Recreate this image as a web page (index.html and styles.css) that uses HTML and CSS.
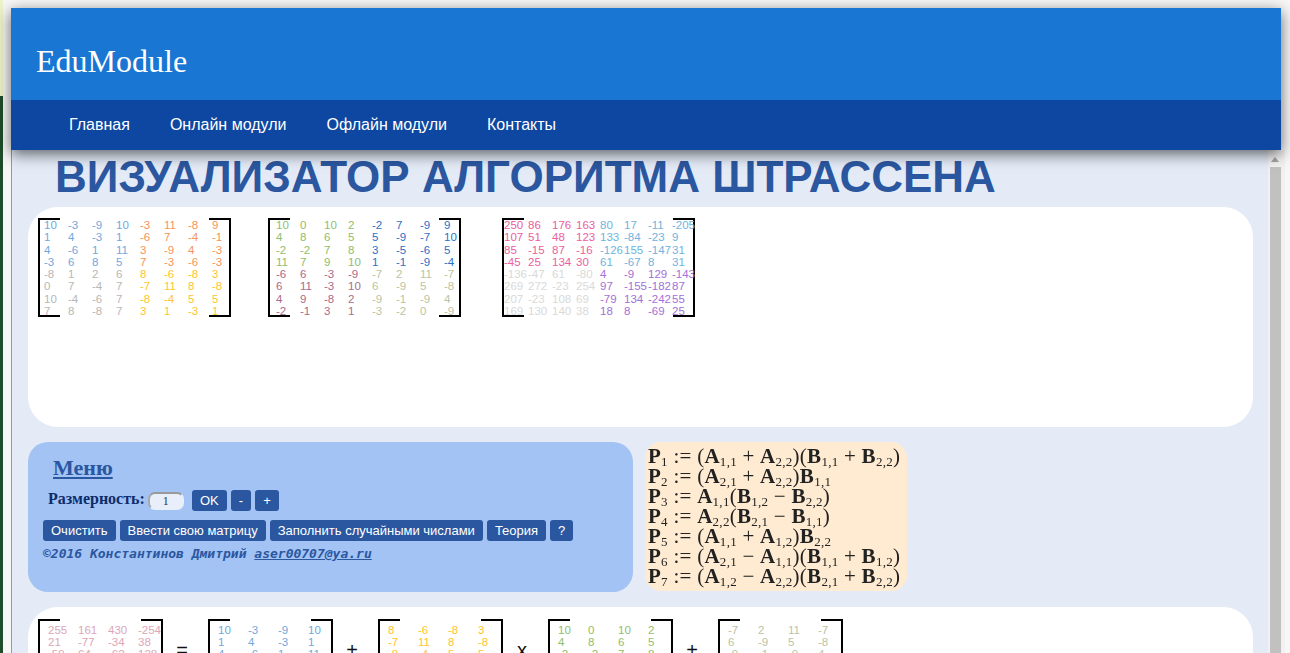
FILE: index.html

```html
<!DOCTYPE html>
<html lang="ru">
<head>
    <meta charset="UTF-8">
    <title>Визуализатор алгоритма Штрассена</title>
    <link rel="stylesheet" href="styles.css">
</head>
<body>
    <header class="site-header">
        <div class="brand">EduModule</div>
        <nav class="nav">
            <a href="#">Главная</a>
            <a href="#">Онлайн модули</a>
            <a href="#">Офлайн модули</a>
            <a href="#">Контакты</a>
        </nav>
    </header>

    <div class="frame">
        <main class="content">
            <h1>ВИЗУАЛИЗАТОР АЛГОРИТМА ШТРАССЕНА</h1>

            <section class="panel panel-top">
                <div class="matrix big m1">
                    <div class="quad c-blue"><span>10</span><span>-3</span><span>-9</span><span>10</span><span>1</span><span>4</span><span>-3</span><span>1</span><span>4</span><span>-6</span><span>1</span><span>11</span><span>-3</span><span>6</span><span>8</span><span>5</span></div>
                    <div class="quad c-orange"><span>-3</span><span>11</span><span>-8</span><span>9</span><span>-6</span><span>7</span><span>-4</span><span>-1</span><span>3</span><span>-9</span><span>4</span><span>-3</span><span>7</span><span>-3</span><span>-6</span><span>-3</span></div>
                    <div class="quad c-gray"><span>-8</span><span>1</span><span>2</span><span>6</span><span>0</span><span>7</span><span>-4</span><span>7</span><span>10</span><span>-4</span><span>-6</span><span>7</span><span>7</span><span>8</span><span>-8</span><span>7</span></div>
                    <div class="quad c-yellow"><span>8</span><span>-6</span><span>-8</span><span>3</span><span>-7</span><span>11</span><span>8</span><span>-8</span><span>-8</span><span>-4</span><span>5</span><span>5</span><span>3</span><span>1</span><span>-3</span><span>1</span></div>
                </div>
                <div class="matrix big m2">
                    <div class="quad c-green"><span>10</span><span>0</span><span>10</span><span>2</span><span>4</span><span>8</span><span>6</span><span>5</span><span>-2</span><span>-2</span><span>7</span><span>8</span><span>11</span><span>7</span><span>9</span><span>10</span></div>
                    <div class="quad c-deep"><span>-2</span><span>7</span><span>-9</span><span>9</span><span>5</span><span>-9</span><span>-7</span><span>10</span><span>3</span><span>-5</span><span>-6</span><span>5</span><span>1</span><span>-1</span><span>-9</span><span>-4</span></div>
                    <div class="quad c-mauve"><span>-6</span><span>6</span><span>-3</span><span>-9</span><span>6</span><span>11</span><span>-3</span><span>10</span><span>4</span><span>9</span><span>-8</span><span>2</span><span>-2</span><span>-1</span><span>3</span><span>1</span></div>
                    <div class="quad c-sage"><span>-7</span><span>2</span><span>11</span><span>-7</span><span>6</span><span>-9</span><span>5</span><span>-8</span><span>-9</span><span>-1</span><span>-9</span><span>4</span><span>-3</span><span>-2</span><span>0</span><span>-9</span></div>
                </div>
                <div class="matrix big m3">
                    <div class="quad c-pink"><span>250</span><span>86</span><span>176</span><span>163</span><span>107</span><span>51</span><span>48</span><span>123</span><span>85</span><span>-15</span><span>87</span><span>-16</span><span>-45</span><span>25</span><span>134</span><span>30</span></div>
                    <div class="quad c-sky"><span>80</span><span>17</span><span>-11</span><span>-205</span><span>133</span><span>-84</span><span>-23</span><span>9</span><span>-126</span><span>155</span><span>-147</span><span>31</span><span>61</span><span>-67</span><span>8</span><span>31</span></div>
                    <div class="quad c-silver"><span>-136</span><span>-47</span><span>61</span><span>-80</span><span>269</span><span>272</span><span>-23</span><span>254</span><span>207</span><span>-23</span><span>108</span><span>69</span><span>169</span><span>130</span><span>140</span><span>38</span></div>
                    <div class="quad c-purple"><span>4</span><span>-9</span><span>129</span><span>-143</span><span>97</span><span>-155</span><span>-182</span><span>87</span><span>-79</span><span>134</span><span>-242</span><span>55</span><span>18</span><span>8</span><span>-69</span><span>25</span></div>
                </div>
            </section>

            <div class="middle">
                <section class="menu">
                    <h2><a href="#">Меню</a></h2>
                    <div class="size-row">
                        <label for="size">Размерность:</label>
                        <input id="size" class="size-input" value="1">
                        <button class="btn ok">OK</button>
                        <button class="btn">-</button>
                        <button class="btn">+</button>
                    </div>
                    <div class="btn-row">
                        <button class="btn">Очистить</button>
                        <button class="btn">Ввести свою матрицу</button>
                        <button class="btn">Заполнить случайными числами</button>
                        <button class="btn">Теория</button>
                        <button class="btn">?</button>
                    </div>
                    <p class="copy">©2016 Константинов Дмитрий <a href="#">aser00707@ya.ru</a></p>
                </section>

                <section class="formulas">
                    <div><b>P</b><sub>1</sub> := (<b>A</b><sub>1,1</sub> + <b>A</b><sub>2,2</sub>)(<b>B</b><sub>1,1</sub> + <b>B</b><sub>2,2</sub>)</div>
                    <div><b>P</b><sub>2</sub> := (<b>A</b><sub>2,1</sub> + <b>A</b><sub>2,2</sub>)<b>B</b><sub>1,1</sub></div>
                    <div><b>P</b><sub>3</sub> := <b>A</b><sub>1,1</sub>(<b>B</b><sub>1,2</sub> − <b>B</b><sub>2,2</sub>)</div>
                    <div><b>P</b><sub>4</sub> := <b>A</b><sub>2,2</sub>(<b>B</b><sub>2,1</sub> − <b>B</b><sub>1,1</sub>)</div>
                    <div><b>P</b><sub>5</sub> := (<b>A</b><sub>1,1</sub> + <b>A</b><sub>1,2</sub>)<b>B</b><sub>2,2</sub></div>
                    <div><b>P</b><sub>6</sub> := (<b>A</b><sub>2,1</sub> − <b>A</b><sub>1,1</sub>)(<b>B</b><sub>1,1</sub> + <b>B</b><sub>1,2</sub>)</div>
                    <div><b>P</b><sub>7</sub> := (<b>A</b><sub>1,2</sub> − <b>A</b><sub>2,2</sub>)(<b>B</b><sub>2,1</sub> + <b>B</b><sub>2,2</sub>)</div>
                </section>
            </div>

            <section class="panel panel-bottom">
                <div class="matrix small">
                    <div class="quad c-rose"><span>255</span><span>161</span><span>430</span><span>-254</span><span>21</span><span>-77</span><span>-34</span><span>38</span><span>-59</span><span>64</span><span>-62</span><span>128</span></div>
                </div>
                <span class="op">=</span>
                <div class="matrix small">
                    <div class="quad c-blue"><span>10</span><span>-3</span><span>-9</span><span>10</span><span>1</span><span>4</span><span>-3</span><span>1</span><span>4</span><span>-6</span><span>1</span><span>11</span></div>
                </div>
                <span class="op">+</span>
                <div class="matrix small">
                    <div class="quad c-yellow"><span>8</span><span>-6</span><span>-8</span><span>3</span><span>-7</span><span>11</span><span>8</span><span>-8</span><span>-8</span><span>-4</span><span>5</span><span>5</span></div>
                </div>
                <span class="op">x</span>
                <div class="matrix small">
                    <div class="quad c-green"><span>10</span><span>0</span><span>10</span><span>2</span><span>4</span><span>8</span><span>6</span><span>5</span><span>-2</span><span>-2</span><span>7</span><span>8</span></div>
                </div>
                <span class="op">+</span>
                <div class="matrix small">
                    <div class="quad c-sage"><span>-7</span><span>2</span><span>11</span><span>-7</span><span>6</span><span>-9</span><span>5</span><span>-8</span><span>-9</span><span>-1</span><span>-9</span><span>4</span></div>
                </div>
            </section>
        </main>

        <div class="scrollbar">
            <div class="scroll-arrow"></div>
            <div class="scroll-thumb"></div>
        </div>
    </div>
</body>
</html>
```

FILE: styles.css

```css
body { margin: 0; padding: 8px 0 0 11px; box-sizing: border-box; height: 653px; overflow: hidden; font-family: "Liberation Sans", Arial, sans-serif; background: linear-gradient(#eef2c8, #eef2c8) 0 0 / 3px 96px no-repeat, linear-gradient(#1f4d2b, #1f4d2b) 0 0 / 3px 100% no-repeat, #f7f7f7; }

.site-header { position: relative; z-index: 2; width: 1270px; box-shadow: 0 4px 14px rgba(0, 0, 0, .6); }
.brand { height: 92px; box-sizing: border-box; padding: 34px 0 0 25px; background: #1976d2; color: #fff; font-family: "Liberation Serif", serif; font-size: 32px; line-height: 38px; }
.nav { height: 50px; display: flex; gap: 40px; padding-left: 58px; align-items: center; background: #0d47a1; }
.nav a { color: #fff; font-size: 16px; text-decoration: none; }

.frame { display: flex; height: 503px; }
.content { box-sizing: border-box; width: 1257px; padding: 0 15px 0 16px; border-left: 1px solid #999; background: #e4ebf7; overflow: hidden; }
h1 { margin: 0; padding-left: 27px; height: 57px; color: #2b57a0; font-size: 44px; line-height: 54px; white-space: nowrap; }

.panel { background: #fff; border-radius: 30px; box-sizing: border-box; display: flex; }
.panel-top { height: 220px; padding: 11px 0 0 10px; }
.panel-bottom { height: 200px; padding: 12px 0 0 10px; }

.matrix { box-sizing: border-box; border-left: 2px solid #000; border-right: 2px solid #000; font-size: 11.5px; line-height: 12px; background:
    linear-gradient(#000, #000) top left / 20px 2px no-repeat,
    linear-gradient(#000, #000) top right / 20px 2px no-repeat,
    linear-gradient(#000, #000) bottom left / 20px 2px no-repeat,
    linear-gradient(#000, #000) bottom right / 20px 2px no-repeat; }
.big { width: 193px; height: 99px; padding-top: 1px; display: grid; grid-template-columns: 96px 96px; }
.big .quad { display: grid; grid-template-columns: repeat(4, 24px); }
.m1 { padding-left: 4px; }
.m2 { padding-left: 6px; margin-left: 37px; }
.m3 { margin-left: 41px; }
.quad span { white-space: nowrap; }

.small { width: 125px; height: 100px; padding: 5px 0 0 8px; }
.small .quad { display: grid; grid-template-columns: repeat(4, 30px); }
.op { width: 38px; padding: 19px 7px 0 0; text-align: center; font-size: 20px; line-height: 24px; color: #111; }

.c-blue { color: #6fa8dc; }
.c-orange { color: #f6935c; }
.c-gray { color: #b7b7b7; }
.c-yellow { color: #ffc42e; }
.c-green { color: #8fbe6a; }
.c-deep { color: #1f72c9; }
.c-mauve { color: #a96b8c; }
.c-sage { color: #b9c4a4; }
.c-pink { color: #ec5ea0; }
.c-sky { color: #6fb3e0; }
.c-silver { color: #d9d9d9; }
.c-purple { color: #a56fd9; }
.c-rose { color: #dca6b8; }

.middle { display: flex; gap: 12px; margin: 15px 0; }
.menu { box-sizing: border-box; width: 605px; height: 150px; padding: 13px 15px 0; background: #a2c3f4; border-radius: 20px; }
.menu h2 { margin: 0 0 0 10px; font-family: "Liberation Serif", serif; font-size: 22px; line-height: 25px; }
.menu h2 a { color: #2b57a0; }
.size-row { display: flex; align-items: flex-start; margin: 10px 0 0 5px; height: 21px; }
.size-row label { color: #0d2c6b; font-family: "Liberation Serif", serif; font-weight: bold; font-size: 16px; line-height: 17px; margin-right: 3px; }
.size-input { box-sizing: border-box; width: 36px; height: 18px; margin: 2px 8px 0 0; padding: 0; text-align: center; font-family: "Liberation Serif", serif; font-size: 12px; color: #333; background: #e8eefa; border: 2px solid #e8eefa; border-top-color: #999; border-left-color: #aaa; border-radius: 7px; }
.btn { height: 21px; padding: 0 8px; margin-right: 4px; border: 0; border-radius: 3px; background: #2b57a0; color: #fff; font-family: "Liberation Sans", Arial, sans-serif; font-size: 13px; }
.ok { width: 35px; }
.btn-row { display: flex; margin-top: 9px; }
.copy { margin: 5px 0 0; font-family: "DejaVu Sans Mono", monospace; font-weight: bold; font-style: italic; font-size: 13px; line-height: 15px; color: #2b57a0; white-space: nowrap; }
.copy a { color: #2b57a0; }

.formulas { box-sizing: border-box; width: 262px; height: 149px; padding: 4px 0 0 3px; background: #ffebd1; border-radius: 16px; color: #222; font-family: "Liberation Serif", serif; font-size: 21px; line-height: 20px; letter-spacing: .27px; white-space: nowrap; filter: blur(.3px); }
.formulas div { height: 20px; }
.formulas sub { font-size: 13px; line-height: 0; vertical-align: -3px; }

.scrollbar { width: 17px; background: #f1f1f1; }
.scroll-arrow { margin: 7px 0 5px 3px; width: 0; height: 0; border-left: 4px solid transparent; border-right: 4px solid transparent; border-bottom: 5px solid #a3a3a3; }
.scroll-thumb { margin-left: 2px; width: 11px; height: 486px; background: #c1c1c1; }
```
